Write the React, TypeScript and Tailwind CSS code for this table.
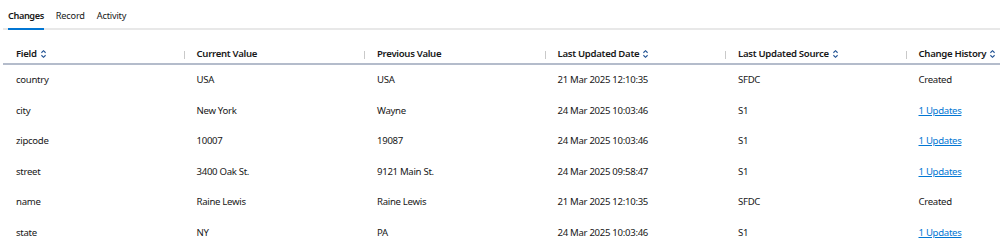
type Row = {
  field: string;
  current: string;
  previous: string;
  date: string;
  source: string;
  history: string;
  link?: boolean;
};

const rows: Row[] = [
  { field: 'country', current: 'USA', previous: 'USA', date: '21 Mar 2025 12:10:35', source: 'SFDC', history: 'Created' },
  { field: 'city', current: 'New York', previous: 'Wayne', date: '24 Mar 2025 10:03:46', source: 'S1', history: '1 Updates', link: true },
  { field: 'zipcode', current: '10007', previous: '19087', date: '24 Mar 2025 10:03:46', source: 'S1', history: '1 Updates', link: true },
  { field: 'street', current: '3400 Oak St.', previous: '9121 Main St.', date: '24 Mar 2025 09:58:47', source: 'S1', history: '1 Updates', link: true },
  { field: 'name', current: 'Raine Lewis', previous: 'Raine Lewis', date: '21 Mar 2025 12:10:35', source: 'SFDC', history: 'Created' },
  { field: 'state', current: 'NY', previous: 'PA', date: '24 Mar 2025 10:03:46', source: 'S1', history: '1 Updates', link: true },
];

const columns = [
  { label: 'Field', sortable: true },
  { label: 'Current Value', sortable: false },
  { label: 'Previous Value', sortable: false },
  { label: 'Last Updated Date', sortable: true },
  { label: 'Last Updated Source', sortable: true },
  { label: 'Change History', sortable: true },
];

function SortIcon() {
  return (
    <svg viewBox="0 0 8 12" className="w-[7px] h-[10px] ml-[3px]" fill="none" stroke="#1d4f91" strokeWidth="1.3">
      <path d="M1.5 4.5 L4 2 L6.5 4.5" />
      <path d="M1.5 7.5 L4 10 L6.5 7.5" />
    </svg>
  );
}

const grid = 'grid grid-cols-[repeat(6,180.5px)] w-[1083px]';

export default function App() {
  const tabs = ['Changes', 'Record', 'Activity'];

  return (
    <div className="bg-white w-[1000px] h-[251px] overflow-hidden text-[#181818]" style={{ fontFamily: '"Noto Sans", sans-serif' }}>
      <div className="ml-[3px] flex gap-[12px] pl-[5px] border-b-2 border-[#e8e8e8] h-[30px] items-end">
        {tabs.map((t, i) => (
          <div
            key={t}
            className={`text-[9.2px] pb-[5px] -mb-[2px] border-b-2 ${i === 0 ? 'border-[#0176d3] font-semibold tracking-[-0.4px]' : 'border-transparent tracking-[-0.2px]'}`}
          >
            {t}
          </div>
        ))}
      </div>

      <div className="ml-[3px] mt-[13px] text-[9.6px] tracking-[-0.3px]">
        <div className={`${grid} h-[22px] border-b-2 border-[#b4bccb]`}>
          {columns.map((c, i) => (
            <div key={c.label} className="relative flex items-center pl-[13px] pt-[2px] font-semibold">
              {c.label}
              {c.sortable && <SortIcon />}
              {i > 0 && <span className="absolute left-0 top-[8px] h-[8px] w-px bg-[#c9c9c9]" />}
            </div>
          ))}
        </div>
        {rows.map((r) => (
          <div key={r.field} className={`${grid} h-[30.6px] items-center`}>
            <div className="pl-[13px]">{r.field}</div>
            <div className="pl-[13px]">{r.current}</div>
            <div className="pl-[13px]">{r.previous}</div>
            <div className="pl-[13px]">{r.date}</div>
            <div className="pl-[13px]">{r.source}</div>
            <div className="pl-[13px]">
              {r.link ? <a className="text-[#0176d3] underline cursor-pointer">{r.history}</a> : r.history}
            </div>
          </div>
        ))}
      </div>
    </div>
  );
}
